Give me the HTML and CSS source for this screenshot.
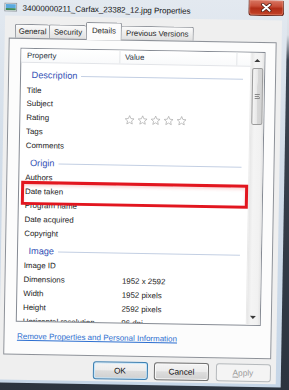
FILE: index.html
```html
<!DOCTYPE html>
<html lang="en">
<head>
    <meta charset="UTF-8">
    <meta name="viewport" content="width=device-width, initial-scale=1.0">
    <title>34000000211_Carfax_23382_12.jpg Properties</title>
    <link rel="stylesheet" href="styles.css">
</head>
<body>
    <div class="window">
        <div class="titlebar">
            <svg class="app-icon" width="13" height="9" viewBox="0 0 13 9">
                <rect x="0.5" y="0.5" width="12" height="8" fill="#fdfdfd" stroke="#8a9198"/>
                <rect x="1.5" y="1.5" width="10" height="4" fill="#5aa9de"/>
                <rect x="1.5" y="5.5" width="10" height="2" fill="#3f8a5a"/>
            </svg>
            <span class="title">34000000211_Carfax_23382_12.jpg Properties</span>
            <div class="close-btn">
                <svg width="12" height="9" viewBox="0 0 12 9">
                    <path d="M2.5 1.5 L9.5 7.5 M9.5 1.5 L2.5 7.5" stroke="#4a1c12" stroke-width="3.4" stroke-linecap="round"/>
                    <path d="M2.5 1.5 L9.5 7.5 M9.5 1.5 L2.5 7.5" stroke="#ffffff" stroke-width="1.9" stroke-linecap="round"/>
                </svg>
            </div>
        </div>

        <div class="client">
            <div class="tabs">
                <div class="tab tab-general">General</div>
                <div class="tab tab-security">Security</div>
                <div class="tab tab-details active">Details</div>
                <div class="tab tab-previous">Previous Versions</div>
            </div>

            <div class="panel">
                <div class="listbox">
                    <div class="list-main">
                        <div class="list-header">
                            <div class="col-prop">Property</div>
                            <div class="col-val">Value</div>
                            <div class="col-rest"></div>
                        </div>
                        <div class="list-body">
                            <div class="group"><span>Description</span></div>
                            <div class="row"><div class="prop">Title</div><div class="val"></div></div>
                            <div class="row"><div class="prop">Subject</div><div class="val"></div></div>
                            <div class="row">
                                <div class="prop">Rating</div>
                                <div class="val stars">
                                    <svg viewBox="0 0 24 24"><polygon points="12,2 14.9,8.6 22,9.3 16.6,14 18.2,21 12,17.3 5.8,21 7.4,14 2,9.3 9.1,8.6"/></svg>
                                    <svg viewBox="0 0 24 24"><polygon points="12,2 14.9,8.6 22,9.3 16.6,14 18.2,21 12,17.3 5.8,21 7.4,14 2,9.3 9.1,8.6"/></svg>
                                    <svg viewBox="0 0 24 24"><polygon points="12,2 14.9,8.6 22,9.3 16.6,14 18.2,21 12,17.3 5.8,21 7.4,14 2,9.3 9.1,8.6"/></svg>
                                    <svg viewBox="0 0 24 24"><polygon points="12,2 14.9,8.6 22,9.3 16.6,14 18.2,21 12,17.3 5.8,21 7.4,14 2,9.3 9.1,8.6"/></svg>
                                    <svg viewBox="0 0 24 24"><polygon points="12,2 14.9,8.6 22,9.3 16.6,14 18.2,21 12,17.3 5.8,21 7.4,14 2,9.3 9.1,8.6"/></svg>
                                </div>
                            </div>
                            <div class="row"><div class="prop">Tags</div><div class="val"></div></div>
                            <div class="row"><div class="prop">Comments</div><div class="val"></div></div>

                            <div class="group"><span>Origin</span></div>
                            <div class="row"><div class="prop">Authors</div><div class="val"></div></div>
                            <div class="row"><div class="prop">Date taken</div><div class="val"></div></div>
                            <div class="row"><div class="prop">Program name</div><div class="val"></div></div>
                            <div class="row"><div class="prop">Date acquired</div><div class="val"></div></div>
                            <div class="row"><div class="prop">Copyright</div><div class="val"></div></div>

                            <div class="group"><span>Image</span></div>
                            <div class="row"><div class="prop">Image ID</div><div class="val"></div></div>
                            <div class="row"><div class="prop">Dimensions</div><div class="val">1952 x 2592</div></div>
                            <div class="row"><div class="prop">Width</div><div class="val">1952 pixels</div></div>
                            <div class="row"><div class="prop">Height</div><div class="val">2592 pixels</div></div>
                            <div class="row"><div class="prop">Horizontal resolution</div><div class="val">96 dpi</div></div>
                        </div>
                        <div class="highlight"></div>
                    </div>
                    <div class="scrollbar">
                        <div class="sb-btn"><span class="arrow-up"></span></div>
                        <div class="sb-track">
                            <div class="sb-thumb"><span class="grip"></span></div>
                        </div>
                        <div class="sb-btn"><span class="arrow-down"></span></div>
                    </div>
                </div>
                <a class="remove-link" href="#">Remove Properties and Personal Information</a>
            </div>

            <div class="buttons">
                <button class="btn default">OK</button>
                <button class="btn">Cancel</button>
                <button class="btn disabled"><u>A</u>pply</button>
            </div>
        </div>
    </div>
</body>
</html>
```

FILE: styles.css
```css
* {
    box-sizing: border-box;
}
body {
    margin: 0;
    width: 289px;
    height: 390px;
    overflow: hidden;
    background: linear-gradient(to bottom, #e6eaee 0, #d8dee5 35px, #3a4451 60px, #2c343f 100%);
    font-family: "Liberation Sans", Arial, sans-serif;
    font-size: 7.9px;
    color: #1e1e1e;
}

/* window frame, slightly tilted like the photo */
.window {
    margin: -2px 0 0 -10px;
    width: 293.5px;
    height: 387px;
    display: flex;
    flex-direction: column;
    padding: 0 5px 3px 12.3px;
    background: linear-gradient(to bottom, #e3e9f0, #d2dde9 40%, #c6d6e7);
    transform: rotate(1deg);
    transform-origin: 154px 197px;
}
.titlebar {
    height: 20px;
    display: flex;
    align-items: flex-start;
    flex-shrink: 0;
}
.app-icon {
    margin: 7.3px 0 0 -1.6px;
    flex-shrink: 0;
}
.title {
    margin: 7.5px 0 0 5.6px;
    font-size: 8px;
    line-height: 10px;
    color: #111;
    white-space: nowrap;
}
.close-btn {
    margin: 0 -2.5px 0 auto;
    width: 36px;
    height: 15.5px;
    flex-shrink: 0;
    display: flex;
    align-items: center;
    justify-content: center;
    padding-top: 1px;
    border: 1px solid #6a2619;
    border-top: none;
    border-radius: 0 0 4px 4px;
    background: linear-gradient(to bottom, #d77663 0, #c9503a 40%, #b12e18 55%, #c34328 100%);
    box-shadow: inset 0 0 0 1px rgba(255, 190, 170, 0.35);
}

.client {
    flex: 1;
    display: flex;
    flex-direction: column;
    padding: 5px 5px 1.5px 4.2px;
    background: #efefef;
}

/* tabs */
.tabs {
    height: 18px;
    display: flex;
    align-items: flex-end;
    padding-left: 5.6px;
    flex-shrink: 0;
}
.tab {
    height: 14.7px;
    line-height: 13px;
    text-align: center;
    font-size: 7.8px;
    color: #1e1e1e;
    border: 1px solid #8d9198;
    border-bottom: none;
    border-right: none;
    border-radius: 2px 2px 0 0;
    background: linear-gradient(to bottom, #fbfbfb, #ececec 50%, #dedede);
    white-space: nowrap;
}
.tab-general { width: 34.3px; }
.tab-security { width: 36.7px; }
.tab-details { width: 36px; }
.tab-previous { width: 71.9px; border-right: 1px solid #8d9198; }
.tab.active {
    position: relative;
    z-index: 1;
    height: 18px;
    line-height: 16px;
    border-right: 1px solid #8d9198;
    background: #fcfcfc;
}
.tab.active + .tab {
    border-left: none;
}

.panel {
    height: 316.6px;
    margin-top: -1px;
    display: flex;
    flex-direction: column;
    padding: 9.2px 10px 0 10.8px;
    border: 1px solid #8d9198;
    background: #fcfcfc;
    flex-shrink: 0;
}

/* list */
.listbox {
    height: 273.8px;
    display: flex;
    border: 1px solid #858a93;
    background: #fff;
    flex-shrink: 0;
}
.list-main {
    flex: 1;
    position: relative;
    display: flex;
    flex-direction: column;
    min-width: 0;
}
.list-header {
    height: 14px;
    display: flex;
    border-bottom: 1px solid #e2e4e8;
    background: linear-gradient(to bottom, #ffffff, #f9fafb);
    line-height: 13px;
    font-size: 7.8px;
    color: #2a3442;
    flex-shrink: 0;
}
.col-prop {
    width: 98.9px;
    padding-left: 5.3px;
    border-right: 1px solid #e3e5e8;
}
.col-val {
    width: 117.3px;
    padding-left: 4.4px;
    border-right: 1px solid #e3e5e8;
}
.col-rest {
    flex: 1;
}
.list-body {
    flex: 1;
    overflow: hidden;
    padding-top: 1.8px;
}
.group {
    height: 18.6px;
    display: flex;
    align-items: center;
    padding: 2.4px 7px 0 10.2px;
    font-size: 9.2px;
    color: #3552b5;
}
.group::after {
    content: "";
    flex: 1;
    height: 1px;
    margin-left: 4px;
    background: #c3cfe3;
}
.row {
    height: 13.85px;
    line-height: 13.85px;
    display: flex;
    color: #222;
    white-space: nowrap;
}
.prop {
    width: 98.9px;
    padding-left: 5.7px;
    overflow: hidden;
}
.val {
    padding-left: 5.3px;
}
.stars {
    display: flex;
    align-items: center;
    gap: 2.2px;
}
.stars svg {
    width: 10.6px;
    height: 10.6px;
}
.stars polygon {
    fill: #fff;
    stroke: #a9a9a9;
    stroke-width: 1.6;
    stroke-linejoin: round;
}

/* red annotation box */
.highlight {
    position: absolute;
    left: 1.4px;
    top: 132.3px;
    width: 227px;
    height: 23.3px;
    border: 3px solid #e2161f;
    box-shadow: inset 0 2px 3px rgba(226, 40, 40, 0.18);
}

/* scrollbar */
.scrollbar {
    width: 14px;
    display: flex;
    flex-direction: column;
    background: linear-gradient(to right, #e6e6e6, #f4f4f4 30%, #f1f1f1 80%, #e4e4e4);
    border-left: 1px solid #eaeaea;
}
.sb-btn {
    height: 14px;
    display: flex;
    align-items: center;
    justify-content: center;
    flex-shrink: 0;
}
.arrow-up {
    width: 0;
    height: 0;
    border-left: 3px solid transparent;
    border-right: 3px solid transparent;
    border-bottom: 3px solid #3a3a3a;
}
.arrow-down {
    width: 0;
    height: 0;
    border-left: 3px solid transparent;
    border-right: 3px solid transparent;
    border-top: 3px solid #3a3a3a;
}
.sb-track {
    flex: 1;
}
.sb-thumb {
    height: 57px;
    margin: 0.8px 1px 0 1.5px;
    display: flex;
    align-items: center;
    justify-content: center;
    border: 1px solid #9b9b9b;
    border-radius: 2px;
    background: linear-gradient(to right, #f5f5f5, #e7e7e7 50%, #d8d8d8 51%, #d2d2d2);
}
.grip {
    width: 5px;
    height: 5px;
    border-top: 1px solid #8a8a8a;
    border-bottom: 1px solid #8a8a8a;
    background: linear-gradient(to bottom, transparent 1.5px, #8a8a8a 1.5px, #8a8a8a 2.5px, transparent 2.5px);
}

.remove-link {
    margin-top: 9.3px;
    padding-left: 1.2px;
    line-height: 11px;
    font-size: 8px;
    color: #2d6fd0;
    text-decoration: underline;
    white-space: nowrap;
}

/* dialog buttons */
.buttons {
    margin-top: 5.4px;
    display: flex;
    justify-content: flex-end;
    gap: 6.5px;
    flex-shrink: 0;
}
.btn {
    width: 55px;
    height: 18.5px;
    padding: 0;
    font-family: "Liberation Sans", Arial, sans-serif;
    font-size: 8.3px;
    color: #111;
    border: 1px solid #707070;
    border-radius: 3px;
    background: linear-gradient(to bottom, #f4f4f4 0, #ececec 48%, #dddddd 52%, #d0d0d0 100%);
    box-shadow: inset 0 0 0 1px #fbfbfb;
}
.btn.default {
    border-color: #3c7fb1;
    box-shadow: inset 0 0 0 1px #c6e6fb;
}
.btn.disabled {
    color: #9a9a9a;
    border-color: #b5b9bc;
    background: #f4f4f4;
    box-shadow: none;
}
```
